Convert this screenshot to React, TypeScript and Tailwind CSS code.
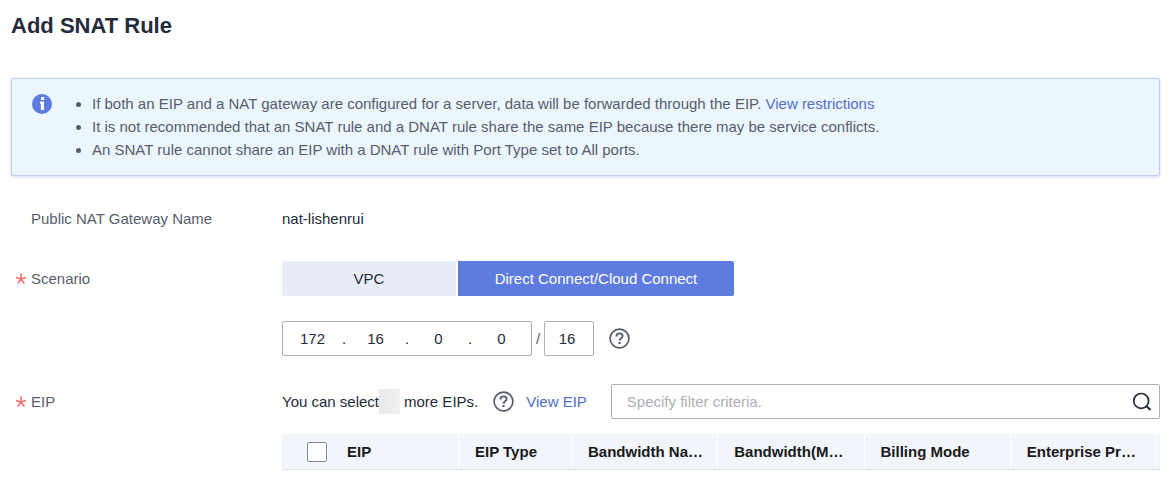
import { Fragment, useState } from "react";
import type { ReactNode } from "react";

const columns = ["EIP", "EIP Type", "Bandwidth Na…", "Bandwidth(M…", "Billing Mode", "Enterprise Pr…"];

function InfoIcon() {
  return (
    <svg viewBox="0 0 20 20" className="size-5 shrink-0" aria-hidden="true">
      <circle cx="10" cy="10" r="10" fill="#5e7ce0" />
      <rect x="9" y="3" width="3.2" height="3" rx="0.6" fill="#fff" />
      <path d="M8 7.6h4v8.4H8.8V9.4H8z" fill="#fff" />
    </svg>
  );
}

function HelpIcon() {
  return (
    <svg viewBox="0 0 21 21" className="size-[21px]" fill="none" aria-hidden="true">
      <circle cx="10.5" cy="10.5" r="9.4" stroke="#575d6c" strokeWidth="1.7" />
      <path
        d="M7.4 8.5c0-2 1.3-3.1 3.1-3.1s3.1 1.1 3.1 2.7c0 2.2-3 2.2-3 4.6"
        stroke="#575d6c"
        strokeWidth="1.9"
      />
      <rect x="9.5" y="14" width="2.1" height="2.1" fill="#575d6c" />
    </svg>
  );
}

function SearchIcon() {
  return (
    <svg viewBox="0 0 20 20" className="size-5" fill="none" stroke="#252b3a" strokeWidth="1.7" aria-hidden="true">
      <circle cx="9.2" cy="8.9" r="7.4" />
      <path d="M14.2 14l4.4 4" strokeWidth="2.1" />
    </svg>
  );
}

function RequiredMark() {
  return (
    <svg viewBox="0 0 12 12" className="size-3" stroke="#f66f6a" strokeWidth="1.6" aria-hidden="true">
      <path d="M6 5.9V.6M6 5.9L1 4.4M6 5.9l5-1.5M6 5.9l-3.3 4.6M6 5.9l3.3 4.6" />
    </svg>
  );
}

function Row({ label, required, children }: { label: string; required?: boolean; children: ReactNode }) {
  return (
    <div className="flex">
      <div className="flex h-[35px] w-[271px] shrink-0 items-center text-[#575d6c]">
        <span className="flex w-5 shrink-0 justify-center">{required && <RequiredMark />}</span>
        {label}
      </div>
      <div className="min-w-0 flex-1">{children}</div>
    </div>
  );
}

export default function App() {
  const [scenario, setScenario] = useState("dc");
  const [octets, setOctets] = useState(["172", "16", "0", "0"]);
  const [mask, setMask] = useState("16");

  return (
    <main className="bg-white pt-3 pr-[10px] pb-5 pl-[11px] font-['Liberation_Sans',Arial,sans-serif] text-[15px] leading-[23px] text-[#252b3a]">
      <h1 className="text-[22px] leading-7 font-bold">Add SNAT Rule</h1>

      <section className="mt-[38px] flex rounded-[2px] border border-[#bfcdfb] bg-[#ebf6ff] pt-[13px] pb-[14px] pl-5 text-[#575d6c] shadow-[0_1px_3px_rgba(94,124,224,0.3)]">
        <div className="flex h-[23px] items-center">
          <InfoIcon />
        </div>
        <ul className="list-disc pl-10">
          <li>
            If both an EIP and a NAT gateway are configured for a server, data will be forwarded through the EIP.{" "}
            <a href="#restrictions" className="text-[#526ecc]">
              View restrictions
            </a>
          </li>
          <li>It is not recommended that an SNAT rule and a DNAT rule share the same EIP because there may be service conflicts.</li>
          <li>An SNAT rule cannot share an EIP with a DNAT rule with Port Type set to All ports.</li>
        </ul>
      </section>

      <form className="mt-[25px] flex flex-col" onSubmit={(e) => e.preventDefault()}>
        <Row label="Public NAT Gateway Name">
          <div className="flex h-[35px] items-center">nat-lishenrui</div>
        </Row>

        <div className="mt-[25px]">
          <Row label="Scenario" required>
            <div className="flex gap-[2px]" role="group" aria-label="Scenario">
              <button
                type="button"
                aria-pressed={scenario === "vpc"}
                onClick={() => setScenario("vpc")}
                className="h-[35px] w-[174px] rounded-l-[2px] bg-[#e9edfa] text-[#252b3a] aria-pressed:bg-[#5e7ce0] aria-pressed:text-white"
              >
                VPC
              </button>
              <button
                type="button"
                aria-pressed={scenario === "dc"}
                onClick={() => setScenario("dc")}
                className="h-[35px] w-[276px] rounded-r-[2px] bg-[#e9edfa] text-[#252b3a] aria-pressed:bg-[#5e7ce0] aria-pressed:text-white"
              >
                Direct Connect/Cloud Connect
              </button>
            </div>

            <div className="mt-[25px] flex items-center">
              <div
                role="group"
                aria-label="CIDR block address"
                className="flex h-[35px] w-[250px] items-center rounded-[2px] border border-[#adb0b8]"
              >
                {octets.map((value, i) => (
                  <Fragment key={i}>
                    {i > 0 && <span className="w-1 shrink-0 text-center">.</span>}
                    <input
                      aria-label={`Octet ${i + 1}`}
                      value={value}
                      onChange={(e) => setOctets(octets.map((o, j) => (j === i ? e.target.value : o)))}
                      className="w-0 min-w-0 flex-1 text-center outline-none"
                    />
                  </Fragment>
                ))}
              </div>
              <span className="w-3 text-center text-[#575d6c]">/</span>
              <input
                aria-label="Mask length"
                value={mask}
                onChange={(e) => setMask(e.target.value)}
                className="h-[35px] w-[50px] rounded-[2px] border border-[#adb0b8] pr-1 text-center outline-none"
              />
              <button type="button" aria-label="Help about the CIDR block" className="ml-[15px]">
                <HelpIcon />
              </button>
            </div>
          </Row>
        </div>

        <div className="mt-7">
          <Row label="EIP" required>
            <div className="flex h-[35px] items-center">
              <span>You can select</span>
              <span className="mr-1 h-[25px] w-[21px] bg-linear-to-r from-[#e9e9e9] to-[#f0f0f0]" />
              <span>more EIPs.</span>
              <button type="button" aria-label="Help about EIPs" className="ml-[15px]">
                <HelpIcon />
              </button>
              <a href="#eip" className="ml-3 text-[#526ecc]">
                View EIP
              </a>
              <div className="ml-6 flex h-[35px] min-w-0 flex-1 items-center rounded-[2px] border border-[#adb0b8] pr-[7px] pl-[15px]">
                <input
                  aria-label="Filter EIPs"
                  placeholder="Specify filter criteria."
                  className="min-w-0 flex-1 outline-none placeholder:text-[#adb0b8]"
                />
                <button type="button" aria-label="Search">
                  <SearchIcon />
                </button>
              </div>
            </div>

            <table className="mt-[15px] w-full table-fixed border-separate border-spacing-0 overflow-hidden rounded-t-[2px] border-b border-[#dfe1e6] bg-[#f2f5fc] text-left text-[#191919]">
              <colgroup>
                <col className="w-[177px]" />
                <col className="w-[113px]" />
                <col />
                <col />
                <col />
                <col />
                <col className="w-[3px]" />
              </colgroup>
              <thead>
                <tr>
                  {columns.map((name, i) => (
                    <th key={name} scope="col" className="h-[35px] border-r border-white p-0 pl-4 font-bold whitespace-nowrap first:pl-[25px]">
                      {i === 0 ? (
                        <label className="flex items-center gap-5">
                          <input
                            type="checkbox"
                            aria-label="Select all EIPs"
                            className="size-5 appearance-none rounded-[2px] border border-[#8a8e99] bg-white checked:bg-[#5e7ce0]"
                          />
                          {name}
                        </label>
                      ) : (
                        name
                      )}
                    </th>
                  ))}
                  <td className="p-0" />
                </tr>
              </thead>
            </table>
          </Row>
        </div>
      </form>
    </main>
  );
}
